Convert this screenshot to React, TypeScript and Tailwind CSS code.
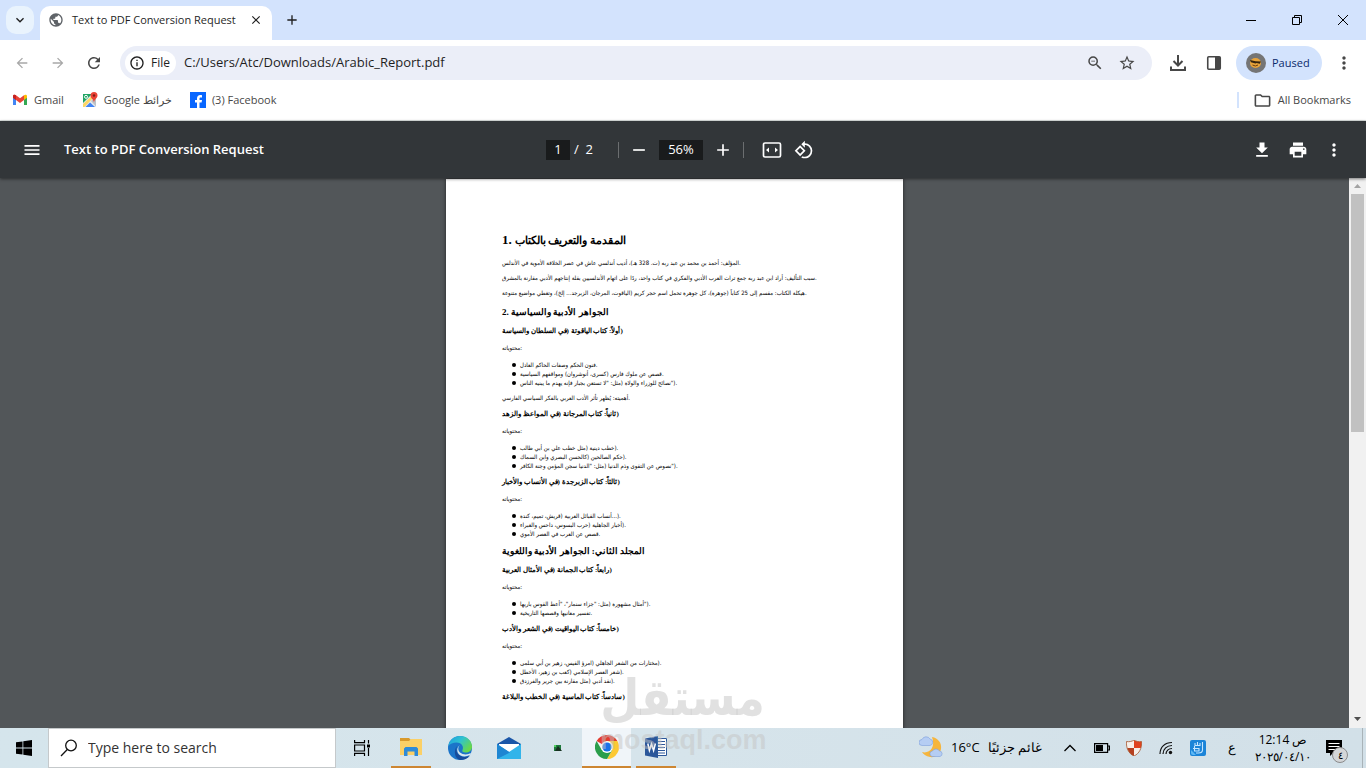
import type { ReactNode } from "react";
import {
  MdAdd,
  MdArrowBack,
  MdArrowForward,
  MdClose,
  MdFileDownload,
  MdInfoOutline,
  MdMenu,
  MdMoreVert,
  MdOutlineFolder,
  MdPrint,
  MdPublic,
  MdRefresh,
  MdRemove,
  MdRotate90DegreesCcw,
  MdStarBorder,
  MdZoomOut,
  MdKeyboardArrowDown,
} from "react-icons/md";

// Each line is an Arabic run followed by punctuation that falls to its right.
type Line = [text: string, tail: string];

const intro: Line[] = [
  ["المؤلف: أحمد بن محمد بن عبد ربه (ت. 328 هـ)، أديب أندلسي عاش في عصر الخلافة الأموية في الأندلس", "."],
  ["سبب التأليف: أراد ابن عبد ربه جمع تراث العرب الأدبي والفكري في كتاب واحد، ردًا على اتهام الأندلسيين بقلة إنتاجهم الأدبي مقارنة بالمشرق", "."],
  ["هيكلة الكتاب: مقسم إلى 25 كتاباً (جوهرة)، كل جوهرة تحمل اسم حجر كريم (الياقوت، المرجان، الزبرجد... إلخ)، وتغطي مواضيع متنوعة", "."],
];

const volumeOne: { title: string; items: Line[]; note?: string }[] = [
  {
    title: "أولاً: كتاب الياقوتة (في السلطان والسياسة",
    items: [
      ["فنون الحكم وصفات الحاكم العادل", "."],
      ["قصص عن ملوك فارس (كسرى، أنوشروان) ومواقفهم السياسية", "."],
      ["نصائح للوزراء والولاة (مثل: \"لا تستعن بجبار فإنه يهدم ما يبنيه الناس", "\")."],
    ],
    note: "أهميته: يُظهر تأثر الأدب العربي بالفكر السياسي الفارسي",
  },
  {
    title: "ثانياً: كتاب المرجانة (في المواعظ والزهد",
    items: [
      ["خطب دينية (مثل خطب علي بن أبي طالب", ")."],
      ["حكم الصالحين (كالحسن البصري وابن السماك", ")."],
      ["نصوص عن التقوى وذم الدنيا (مثل: \"الدنيا سجن المؤمن وجنة الكافر", "\")."],
    ],
  },
  {
    title: "ثالثاً: كتاب الزبرجدة (في الأنساب والأخبار",
    items: [
      ["أنساب القبائل العربية (قريش، تميم، كندة", "...)."],
      ["أخبار الجاهلية (حرب البسوس، داحس والغبراء", ")."],
      ["قصص عن العرب في العصر الأموي", "."],
    ],
  },
];

const volumeTwo: typeof volumeOne = [
  {
    title: "رابعاً: كتاب الجمانة (في الأمثال العربية",
    items: [
      ["أمثال مشهورة (مثل: \"جزاء سنمار\"، \"أعط القوس باريها", "\")."],
      ["تفسير معانيها وقصصها التاريخية", "."],
    ],
  },
  {
    title: "خامساً: كتاب اليواقيت (في الشعر والأدب",
    items: [
      ["مختارات من الشعر الجاهلي (امرؤ القيس، زهير بن أبي سلمى", ")."],
      ["شعر العصر الإسلامي (كعب بن زهير، الأخطل", ")."],
      ["نقد أدبي (مثل مقارنة بين جرير والفرزدق", ")."],
    ],
  },
];

function Arabic({ text, tail }: { text: string; tail: string }) {
  return (
    <>
      <bdi dir="rtl">{text}</bdi>
      <bdi dir="ltr">{tail}</bdi>
    </>
  );
}

function Para({ line }: { line: Line }) {
  return (
    <p className="mt-[7px] font-['DejaVu_Sans_Condensed',sans-serif] text-[6px] leading-[8px]">
      <Arabic text={line[0]} tail={line[1]} />
    </p>
  );
}

function BookTitle({ text }: { text: string }) {
  return (
    <h3 className="mt-[7px] pb-px text-[7px] leading-[10px] font-bold">
      <Arabic text={text} tail=")" />
    </h3>
  );
}

function Book({ title, items, note }: (typeof volumeOne)[number]) {
  return (
    <section>
      <BookTitle text={title} />
      <Para line={["محتوياته", ":"]} />
      <ul className="mt-2">
        {items.map((item) => (
          <li key={item[0]} className="flex items-center gap-1 pl-[10px] font-['DejaVu_Sans_Condensed',sans-serif] text-[6px] leading-[9px]">
            <span className="size-1 rounded-full bg-black" />
            <span>
              <Arabic text={item[0]} tail={item[1]} />
            </span>
          </li>
        ))}
      </ul>
      {note && <Para line={[note, "."]} />}
    </section>
  );
}

function Report() {
  return (
    <article className="h-[646px] w-[457px] shrink-0 bg-white px-14 pt-[53px] font-['Liberation_Serif','Noto_Sans',system-ui] whitespace-nowrap text-black shadow-[0_0_4px_rgba(0,0,0,0.6)]">
      <h1 className="pb-1 text-[11px] leading-4 font-bold">
        <span className="text-[13px]">1.</span> <bdi>المقدمة والتعريف بالكتاب</bdi>
      </h1>
      <div className="pb-0.5">
        {intro.map((line) => (
          <Para key={line[0]} line={line} />
        ))}
      </div>
      <h2 className="mt-[7px] pb-px text-[9px] leading-3 font-bold">
        <span>2.</span> <bdi>الجواهر الأدبية والسياسية</bdi>
      </h2>
      {volumeOne.map((book) => (
        <Book key={book.title} {...book} />
      ))}
      <h2 className="mt-[7px] pb-px text-[9px] leading-3 font-bold">
        <bdi>المجلد الثاني: الجواهر الأدبية واللغوية</bdi>
      </h2>
      {volumeTwo.map((book) => (
        <Book key={book.title} {...book} />
      ))}
      <BookTitle text="سادساً: كتاب الماسية (في الخطب والبلاغة" />
    </article>
  );
}

function TabStrip() {
  return (
    <header className="flex h-10 items-center bg-[#d3e3fd] text-[#1f1f1f]">
      <button aria-label="Search tabs" className="ml-1.5 flex size-7 items-center justify-center rounded-[10px] bg-[#e9f3fd]">
        <MdKeyboardArrowDown className="size-4" />
      </button>
      <div className="mt-1.5 ml-1.5 flex h-[34px] w-[232px] items-center rounded-t-[10px] bg-white pb-1.5 pl-2">
        <MdPublic className="size-4 text-[#5f6368]" />
        <span className="ml-2 flex-1 text-[11px] whitespace-nowrap">Text to PDF Conversion Request</span>
        <button aria-label="Close tab" className="mr-2 flex size-4 items-center justify-center">
          <MdClose className="size-3.5" />
        </button>
      </div>
      <button aria-label="New tab" className="ml-3 flex size-4 items-center justify-center">
        <MdAdd className="size-4" />
      </button>
      <div className="ml-auto flex text-black">
        <button aria-label="Minimize" className="flex h-10 w-[46px] items-center justify-center">
          <svg className="size-[10px]" viewBox="0 0 10 10" stroke="currentColor">
            <path d="M0 5.5h10" />
          </svg>
        </button>
        <button aria-label="Restore" className="flex h-10 w-[46px] items-center justify-center">
          <svg className="size-[10px]" viewBox="0 0 10 10" fill="none" stroke="currentColor">
            <path d="M.5 2.5h7v7h-7zM2.5 2.5v-2h7v7h-2" />
          </svg>
        </button>
        <button aria-label="Close" className="flex h-10 w-[46px] items-center justify-center">
          <svg className="size-[10px]" viewBox="0 0 10 10" stroke="currentColor">
            <path d="M0 0l10 10M10 0L0 10" />
          </svg>
        </button>
      </div>
    </header>
  );
}

function AddressBar() {
  return (
    <div className="flex h-[46px] items-center bg-white text-[#474747]">
      <button aria-label="Back" className="ml-3.5 text-[#a8a8a8]">
        <MdArrowBack className="size-4" />
      </button>
      <button aria-label="Forward" className="ml-5 text-[#a8a8a8]">
        <MdArrowForward className="size-4" />
      </button>
      <button aria-label="Reload" className="ml-[19px]">
        <MdRefresh className="size-[18px]" />
      </button>
      <div className="ml-[17px] flex h-[34px] flex-1 items-center rounded-full bg-[#ebeef8] pr-4 pl-[5px] text-[#1f1f1f]">
        <button className="flex h-6 w-[51px] items-center gap-1.5 rounded-full bg-white pl-1 text-xs">
          <MdInfoOutline className="size-4" />
          File
        </button>
        <input
          aria-label="Address"
          defaultValue="C:/Users/Atc/Downloads/Arabic_Report.pdf"
          className="ml-2 min-w-0 flex-1 bg-transparent text-[13px] outline-none"
        />
        <button aria-label="Zoom" className="text-[#474747]">
          <MdZoomOut className="size-[18px]" />
        </button>
        <button aria-label="Bookmark this tab" className="ml-3.5 text-[#474747]">
          <MdStarBorder className="size-[18px]" />
        </button>
      </div>
      <button aria-label="Downloads" className="ml-[17px]">
        <svg className="size-[18px]" viewBox="0 0 18 18" fill="none" stroke="currentColor" strokeWidth="2">
          <path d="M9 1v10M4.5 7L9 11.500 13.500 7M2 12.500V16h14v-3.500" />
        </svg>
      </button>
      <button aria-label="Side panel" className="ml-[19px]">
        <svg className="size-4" viewBox="0 0 16 16">
          <rect x="1.750" y="1.750" width="12.500" height="12.500" rx="1" fill="none" stroke="currentColor" strokeWidth="1.600" />
          <path d="M9 2h5v12H9z" fill="currentColor" />
        </svg>
      </button>
      <button className="ml-3.5 flex h-[34px] w-[86px] items-center gap-1.5 rounded-full bg-[#d3e3fd] pl-[10px] text-[11px] text-[#0a2a6b]">
        <svg className="size-5" viewBox="0 0 20 20">
          <circle cx="10" cy="10" r="10" fill="#757575" />
          <ellipse cx="9.500" cy="10" rx="5.500" ry="5" fill="#e8a33a" />
          <path d="M4 7l5.500 1.200 5.500.3-1.200 2.200-3.300-.6-1 .4L5 9.300z" fill="#33230f" />
          <path d="M6.500 12q3 2 5.500 0" fill="none" stroke="#6b3d10" />
        </svg>
        Paused
      </button>
      <button aria-label="Chrome menu" className="mr-3 ml-3">
        <MdMoreVert className="size-5" />
      </button>
    </div>
  );
}

function Bookmarks() {
  return (
    <nav className="flex h-[35px] items-center border-b border-[#dfe4e2] bg-white pb-[6px] text-[11px] whitespace-nowrap text-[#474747]">
      <a href="#gmail" className="ml-3 flex items-center gap-1.5">
        <svg className="h-4 w-4" viewBox="0 0 16 16">
          <path d="M1 4v9h3V7z" fill="#4285f4" />
          <path d="M15 4v9h-3V7z" fill="#34a853" />
          <path d="M12 4.500V8l3-2.200V4.200C15 2.600 13 2.300 12 3.200z" fill="#fbbc04" />
          <path d="M1 5.800V4.200C1 2.600 3 2.300 4 3.200L8 6.200l4-3V8l-4 3-4-3z" fill="#ea4335" />
          <path d="M1 5.800V4.200C1 2.600 3 2.300 4 3.200V8z" fill="#c5221f" />
        </svg>
        Gmail
      </a>
      <a href="#maps" className="ml-[18px] flex items-center gap-1.5">
        <svg className="size-4" viewBox="0 0 16 16">
          <path d="M1 2h13v13H1z" fill="#e8eaed" />
          <path d="M1 2h9L1 11z" fill="#1fa463" />
          <path d="M1 12L11 3l1.500 1.500L2.500 15H1z" fill="#fdd663" />
          <path d="M3.500 15L8 10.500l5 4.500z" fill="#4285f4" />
          <path d="M9 9l5-4v9.500z" fill="#bdc1c6" />
          <circle cx="4" cy="4.800" r="1.500" fill="none" stroke="#fff" />
          <path d="M12 0a3.500 3.500 0 0 1 3.500 3.500C15.500 6 12.500 7 12 10.500 11.500 7 8.500 6 8.500 3.500A3.500 3.500 0 0 1 12 0z" fill="#ea4335" />
          <circle cx="12" cy="3.500" r="1.200" fill="#811d16" />
        </svg>
        Google خرائط
      </a>
      <a href="#facebook" className="ml-[18px] flex items-center gap-1.5">
        <svg className="size-4" viewBox="0 0 16 16">
          <path d="M0 0h16v16H0z" fill="#0866ff" />
          <path d="M7 16v-5.500H5V8h2V6.500C7 4.200 8.300 3 10.300 3c.7 0 1.400.1 1.700.2v2.200h-1.200c-1 0-1.300.5-1.300 1.200V8H12l-.4 2.500H9.500V16z" fill="#fff" />
        </svg>
        (3) Facebook
      </a>
      <span className="ml-auto h-4 w-0.5 bg-[#d3e3fd]" />
      <button className="mr-[15px] ml-3.5 flex items-center gap-1.5">
        <MdOutlineFolder className="size-[19px]" />
        All Bookmarks
      </button>
    </nav>
  );
}

function PdfToolbar() {
  return (
    <div className="z-10 grid h-[57px] grid-cols-[1fr_auto_1fr] items-center bg-[#323639] text-[13px] text-white shadow-[0_1px_3px_rgba(0,0,0,0.5)]">
      <div className="flex items-center">
        <button aria-label="Menu" className="ml-[22px]">
          <MdMenu className="size-5" />
        </button>
        <h1 className="ml-[22px] font-semibold">Text to PDF Conversion Request</h1>
      </div>
      <div className="flex items-center pr-1.5">
        <input aria-label="Page number" defaultValue="1" className="h-5 w-6 bg-[#191b1c] pb-0.5 text-center" />
        <span className="ml-1 w-11 whitespace-pre">/  2</span>
        <span className="h-4 w-px bg-[#6b6e70]" />
        <button aria-label="Zoom out" className="ml-[10px]">
          <MdRemove className="size-5" />
        </button>
        <input aria-label="Zoom level" defaultValue="56%" className="ml-[10px] h-5 w-11 bg-[#191b1c] pb-0.5 text-center" />
        <button aria-label="Zoom in" className="ml-[10px]">
          <MdAdd className="size-5" />
        </button>
        <span className="ml-[10px] h-4 w-px bg-[#6b6e70]" />
        <button aria-label="Fit to width" className="ml-[18px]">
          <svg className="size-5" viewBox="0 0 20 20">
            <rect x="1.500" y="3" width="17" height="14" rx="1.500" fill="none" stroke="currentColor" strokeWidth="1.700" />
            <path d="M7 7.500v5L4 10zM13 7.500v5l3-2.500z" fill="currentColor" />
          </svg>
        </button>
        <button aria-label="Rotate counterclockwise" className="ml-3">
          <MdRotate90DegreesCcw className="size-5" />
        </button>
      </div>
      <div className="mr-[22px] flex justify-end gap-4">
        <button aria-label="Download">
          <MdFileDownload className="size-5" />
        </button>
        <button aria-label="Print">
          <MdPrint className="size-5" />
        </button>
        <button aria-label="More actions">
          <MdMoreVert className="size-5" />
        </button>
      </div>
    </div>
  );
}

function Scrollbar() {
  return (
    <div className="flex w-[17px] shrink-0 flex-col items-center bg-[#f1f1f1]">
      <svg className="h-4 w-[17px] shrink-0" viewBox="0 0 17 16">
        <path d="M5 10l3.500-4 3.500 4z" fill="#a3a3a3" />
      </svg>
      <div className="h-[238px] w-[13px] bg-[#c1c1c1]" />
      <svg className="mt-auto h-[17px] w-[17px] shrink-0" viewBox="0 0 17 17">
        <path d="M5 6l3.500 4L12 6z" fill="#505050" />
      </svg>
    </div>
  );
}

function AppButton({ label, running, active, children }: { label: string; running?: boolean; active?: boolean; children: ReactNode }) {
  return (
    <button aria-label={label} className={`flex h-10 w-[49px] flex-col items-center ${active ? "bg-[#f0f5f9]" : ""}`}>
      <span className="flex flex-1 items-center justify-center">{children}</span>
      {running && <span className={`h-0.5 bg-[#cd8632] ${active ? "w-full" : "w-10"}`} />}
    </button>
  );
}

function Taskbar() {
  return (
    <footer className="flex h-10 shrink-0 items-center bg-linear-to-r from-[#d5e5ec] via-[#d6e4eb] to-[#d2e0e8] text-black">
      <button aria-label="Start" className="flex w-12 justify-center">
        <svg className="size-4" viewBox="0 0 16 16">
          <path d="M0 2.300L6.500 1.400v6.200H0zM7.300 1.300L16 0v7.600H7.300zM0 8.400h6.500v6.200L0 13.700zM7.300 8.400H16V16l-8.700-1.300z" />
        </svg>
      </button>
      <label className="mr-px flex h-10 w-[288px] items-center border border-[#c5c9cb] bg-white pl-[11px]">
        <svg className="size-[18px]" viewBox="0 0 18 18" fill="none" stroke="#111" strokeWidth="1.300">
          <circle cx="11" cy="6.500" r="5.300" />
          <path d="M7.300 10.500L1 17" />
        </svg>
        <input aria-label="Search" placeholder="Type here to search" className="ml-[10px] min-w-0 flex-1 bg-transparent text-sm outline-none placeholder:text-[#333]" />
      </label>
      <AppButton label="Task view">
        <svg className="size-4" viewBox="0 0 16 16" fill="none" stroke="#000" strokeWidth="1.200">
          <path d="M.6 0v2.600h9.900V0M.6 16v-2.600h9.900V16M.6 5h9.900v6H.6zM14.500 0v3.500M14.500 8v8" />
          <path d="M13 4.500h3v3h-3z" fill="#000" stroke="none" />
        </svg>
      </AppButton>
      <AppButton label="File Explorer" running>
        <svg className="h-5 w-[22px]" viewBox="0 0 22 20">
          <path d="M0 1h9l2 2h10v3H0z" fill="#d99a2b" />
          <path d="M0 4h9l2-2h11v16H0z" fill="#fbd066" />
          <path d="M4 19v-7.500L5.500 10h11l1.500 1.500V19h-3.500v-4.500h-7V19z" fill="#2e8bd8" />
        </svg>
      </AppButton>
      <AppButton label="Edge">
        <svg className="size-6" viewBox="0 0 24 24">
          <defs>
            <linearGradient id="edgeTop" x1="0" y1="0" x2="1" y2="0.600">
              <stop offset="0" stopColor="#1c9be0" />
              <stop offset="0.500" stopColor="#2fc2d0" />
              <stop offset="1" stopColor="#68d849" />
            </linearGradient>
          </defs>
          <circle cx="12" cy="12" r="12" fill="#1b74c9" />
          <path d="M.3 10C1.300 4 6 0 12 0c7 0 12 5 12 10.500 0 4-3 6-6.500 6-2.500 0-4-1-3-2.500C16 11 14 6.500 8.500 6.500 5 6.500 2 8 .3 10z" fill="url(#edgeTop)" />
          <path d="M9 10c-2 5 1 11 8 11 2 0 4-.8 5-1.500C20 22.500 16 24 12 24 7 23 5 15 9 10z" fill="#174c9c" />
          <path d="M12 9c-2 1.500-2.500 5 0 7.500 3 2.500 7.500 2.500 11 .5l-1 2c-5 2.500-10 1.500-12-2-1.500-3-.5-6.500 2-8z" fill="#d9e7ee" />
        </svg>
      </AppButton>
      <AppButton label="Mail">
        <svg className="h-[22px] w-6" viewBox="0 0 24 22">
          <path d="M0 7l12-7 12 7v15H0z" fill="#1a56a8" />
          <path d="M2 7h20v8H2z" fill="#fff" />
          <path d="M0 7l12 8L24 7v15H0z" fill="#32b4ea" />
          <path d="M0 22V7l13 8.500L0 22z" fill="#1e86d2" />
        </svg>
      </AppButton>
      <AppButton label="Photos">
        <svg className="h-2 w-2" viewBox="0 0 8 8">
          <path d="M0 1h7v6H0z" fill="#1f7a3c" />
          <path d="M2 5l2-3 4 5H1z" fill="#16301f" />
          <path d="M0 1h2v2H0z" fill="#56d364" />
        </svg>
      </AppButton>
      <AppButton label="Chrome" running active>
        <svg className="size-6" viewBox="0 0 24 24">
          <path d="M12 12L1.600 6A12 12 0 0 1 22.400 6z" fill="#e33b2e" />
          <path d="M12 12V6h10.400A12 12 0 0 1 12 24l5.200-9z" fill="#fcc934" />
          <path d="M12 12l5.200 3L12 24A12 12 0 0 1 1.600 6l5.200 9z" fill="#2b9e4b" />
          <circle cx="12" cy="12" r="6" fill="#fff" />
          <circle cx="12" cy="12" r="4.600" fill="#1a73e8" />
        </svg>
      </AppButton>
      <AppButton label="Word" running>
        <svg className="h-[22px] w-[22px]" viewBox="0 0 22 22">
          <path d="M11 2.500h10.500v17H11z" fill="#fff" stroke="#2b579a" />
          <path d="M13 5.500h7M13 8.500h7M13 11.500h7M13 14.500h7M13 17h7" stroke="#2b579a" />
          <path d="M0 2.500L13 0v22L0 19.500z" fill="#2b579a" />
          <path d="M2.800 7.500l1.600 7 2.100-6.500 2.100 6.500 1.800-7" fill="none" stroke="#fff" strokeWidth="1.500" />
        </svg>
      </AppButton>

      <div className="ml-auto flex items-center gap-2 text-[13px] whitespace-nowrap">
        <svg className="size-6" viewBox="0 0 24 24">
          <path d="M13 1c6 1 10 6 9 12-1 5-6 9-11 8-4-.5-7-3-8-5 7 2 14-4 10-15z" fill="#f6b53c" />
          <path d="M3 9.500a3 3 0 0 1 0-6 4.500 4.500 0 0 1 8-.5 3.300 3.300 0 0 1 0 6.500z" fill="#b5cdf3" stroke="#7e9fdb" strokeWidth=".6" />
          <path d="M13 20.500a2.800 2.800 0 0 1 .5-5.500 4 4 0 0 1 7 0 2.800 2.800 0 0 1 .5 5.500z" fill="#b5cdf3" stroke="#7e9fdb" strokeWidth=".6" />
        </svg>
        <span>16°C</span>
        <span>غائم جزئيًا</span>
      </div>
      <div className="ml-3 flex items-center">
        <button aria-label="Show hidden icons" className="flex w-8 justify-center">
          <svg className="h-2 w-3" viewBox="0 0 12 8" fill="none" stroke="#000" strokeWidth="1.300">
            <path d="M.5 7L6 1.500 11.500 7" />
          </svg>
        </button>
        <span className="flex w-8 justify-center">
          <svg className="h-[10px] w-4" viewBox="0 0 16 10">
            <path d="M.6.6h13v8.800H.6zM14 3h1.400v4H14" fill="none" stroke="#000" strokeWidth="1.200" />
            <path d="M2 2h7v6H2z" />
          </svg>
        </span>
        <span className="flex w-8 justify-center">
          <svg className="size-4" viewBox="0 0 16 16">
            <path d="M8 0c2 1.500 5 2 7.500 1.500C16 8 13.500 13.500 8 16 2.500 13.500 0 8 .5 1.500 3 2 6 1.500 8 0z" fill="#f6efe9" />
            <path d="M8 0c2 1.500 5 2 7.500 1.500.2 2.500 0 4.500-.7 6.500H8z" fill="#e0431f" />
            <path d="M8 16V8H1.200C2.500 12 4.500 14.500 8 16z" fill="#b5401f" />
            <path d="M8 0c2 1.500 5 2 7.500 1.500C16 8 13.500 13.500 8 16 2.500 13.500 0 8 .5 1.500 3 2 6 1.500 8 0z" fill="none" stroke="#a8572f" strokeWidth=".8" />
          </svg>
        </span>
        <span className="flex w-8 justify-center">
          <svg className="size-[14px]" viewBox="0 0 14 14" fill="none" stroke="#111" strokeWidth="1.200">
            <path d="M1 13C1 6 6 1.500 13 1.500M4 13c0-5 4-8.500 9-8.500M7 13c0-3 2.500-5.500 6-5.500" />
            <circle cx="11.500" cy="11.500" r="1.700" fill="#111" stroke="none" />
          </svg>
        </span>
        <span className="flex w-8 justify-center">
          <svg className="size-4" viewBox="0 0 16 16" fill="none">
            <rect width="16" height="16" rx="2" fill="#1b84d8" />
            <path d="M5 3v2.500h5V3M12.500 2v8q0 3-4 3H6M7.500 2v3.500M3 8.500h6.500M4.500 6v5H9V8.500" stroke="#c6e6ff" strokeWidth="1.100" />
            <path d="M1 10l5 5H3a2 2 0 0 1-2-2z" fill="#5db8f5" />
          </svg>
        </span>
        <span className="flex w-9 justify-center text-[13px]">ع</span>
      </div>
      <div className="w-[66px] text-center text-xs leading-[17px] whitespace-nowrap">
        <div>12:14 ص</div>
        <div>٢٠٢٥/٠٤/١٠</div>
      </div>
      <button aria-label="Notifications" className="relative ml-2 h-10 w-[38px]">
        <svg className="ml-0.5 size-4" viewBox="0 0 16 16">
          <path d="M0 0h16v13H7l-3 3v-3H0z" />
          <path d="M2.500 3.500h11M2.500 6.500h11M2.500 9.500h7" stroke="#fff" />
        </svg>
        <span className="absolute top-[19px] left-2 flex size-4 items-center justify-center rounded-full border border-[#8b8b8b] bg-[#d4d6d8] text-[10px]">٤</span>
      </button>
      <span className="h-10 w-1 border-l border-[#a9b3b8]" />
    </footer>
  );
}

export default function App() {
  return (
    <div className="relative flex h-screen flex-col overflow-hidden font-['Open_Sans','Noto_Sans',sans-serif]">
      <TabStrip />
      <AddressBar />
      <Bookmarks />
      <PdfToolbar />
      <main className="flex min-h-0 flex-1 bg-[#525659]">
        <div className="flex min-w-0 flex-1 justify-center overflow-hidden pt-px">
          <Report />
        </div>
        <Scrollbar />
      </main>
      <Taskbar />
      <div className="pointer-events-none absolute bottom-3.5 left-1/2 ml-[-83px] w-[165px] text-center font-['Liberation_Sans','DejaVu_Sans_Condensed',sans-serif] font-bold text-[#c4c4c4]/50">
        <div className="text-[50px] leading-[56px]">مستقل</div>
        <div className="text-[27px] leading-7">mostaql.com</div>
      </div>
    </div>
  );
}
